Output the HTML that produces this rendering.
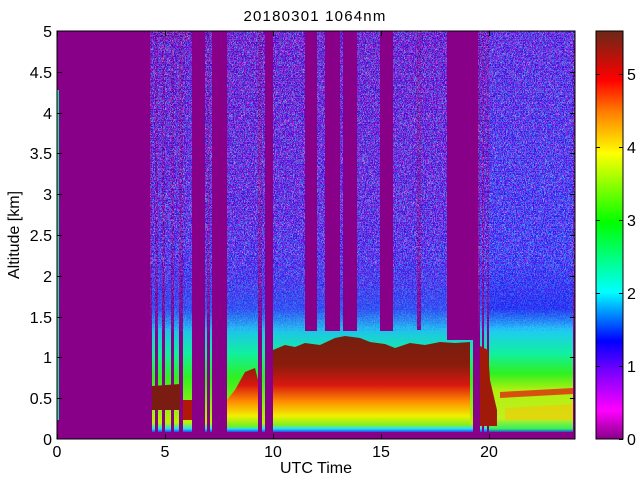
<!DOCTYPE html>
<html><head><style>
html,body{margin:0;padding:0;background:#fff;width:640px;height:480px;overflow:hidden}
svg{display:block;font-family:"Liberation Sans",sans-serif}
</style></head><body>
<svg width="640" height="480" viewBox="0 0 640 480">
<defs>
<linearGradient id="air" x1="0" y1="31" x2="0" y2="439" gradientUnits="userSpaceOnUse">
<stop offset="0" stop-color="#7a10b0"/>
<stop offset="0.45" stop-color="#6a20c8"/>
<stop offset="0.6" stop-color="#4a30e0"/>
<stop offset="0.68" stop-color="#2a50f0"/>
<stop offset="0.73" stop-color="#20c0f0"/>
<stop offset="0.79" stop-color="#10f0a0"/>
<stop offset="0.85" stop-color="#30f020"/>
<stop offset="0.92" stop-color="#90f010"/>
<stop offset="0.96" stop-color="#c0f000"/>
<stop offset="0.975" stop-color="#20e0f0"/>
<stop offset="0.985" stop-color="#2020f0"/>
<stop offset="0.99" stop-color="#880088"/>
</linearGradient>
<linearGradient id="right" x1="0" y1="31" x2="0" y2="439" gradientUnits="userSpaceOnUse">
<stop offset="0" stop-color="#6a20c8"/>
<stop offset="0.55" stop-color="#4038e8"/>
<stop offset="0.68" stop-color="#2030f0"/>
<stop offset="0.73" stop-color="#20c8f8"/>
<stop offset="0.79" stop-color="#10f0a0"/>
<stop offset="0.84" stop-color="#30f020"/>
<stop offset="0.88" stop-color="#b0f010"/>
<stop offset="0.95" stop-color="#c0f020"/>
<stop offset="0.975" stop-color="#30f060"/>
<stop offset="0.985" stop-color="#2020f0"/>
<stop offset="0.99" stop-color="#880088"/>
</linearGradient>
<linearGradient id="aer" x1="0" y1="330" x2="0" y2="430" gradientUnits="userSpaceOnUse">
<stop offset="0" stop-color="#702010"/>
<stop offset="0.35" stop-color="#8a1c0c"/>
<stop offset="0.55" stop-color="#d81810"/>
<stop offset="0.72" stop-color="#ff9000"/>
<stop offset="0.86" stop-color="#f0f000"/>
<stop offset="0.95" stop-color="#80f020"/>
<stop offset="1" stop-color="#20f0a0"/>
</linearGradient>
<linearGradient id="cb" x1="0" y1="439" x2="0" y2="31" gradientUnits="userSpaceOnUse">
<stop offset="0" stop-color="#880088"/>
<stop offset="0.07" stop-color="#ff00ff"/>
<stop offset="0.16" stop-color="#8000ff"/>
<stop offset="0.24" stop-color="#0000ff"/>
<stop offset="0.36" stop-color="#00ffff"/>
<stop offset="0.53" stop-color="#00ff00"/>
<stop offset="0.7" stop-color="#ffff00"/>
<stop offset="0.8" stop-color="#ff8000"/>
<stop offset="0.88" stop-color="#ff0000"/>
<stop offset="1" stop-color="#6a2818"/>
</linearGradient>
<linearGradient id="fade" x1="0" y1="31" x2="0" y2="439" gradientUnits="userSpaceOnUse">
<stop offset="0" stop-color="#fff"/>
<stop offset="0.55" stop-color="#fff"/>
<stop offset="0.78" stop-color="#000"/>
</linearGradient>
<mask id="m"><rect x="0" y="0" width="640" height="480" fill="url(#fade)"/></mask>
<filter id="nz" x="0" y="0" width="100%" height="100%">
<feTurbulence type="fractalNoise" baseFrequency="0.9 0.45" numOctaves="1" seed="3"/>
<feComponentTransfer>
<feFuncR type="discrete" tableValues="0 1 0 1 0 0 1 0"/>
<feFuncG type="discrete" tableValues="0 0 0 0 1 0 0 0"/>
<feFuncB type="discrete" tableValues="1 1 1 1 1 1 1 1"/>
<feFuncA type="discrete" tableValues="0 0 0.45 0.5 0.35 0.45 0 0"/>
</feComponentTransfer>
</filter>
</defs>
<rect width="640" height="480" fill="#fff"/>
<rect x="57" y="31" width="518" height="408" fill="#880088"/>
<g fill="url(#air)">
<rect x="152" y="40" width="3" height="392"/>
<rect x="158" y="40" width="4" height="392"/>
<rect x="165" y="40" width="6" height="392"/>
<rect x="174" y="40" width="5" height="392"/>
<rect x="183" y="40" width="9" height="392"/>
<rect x="205" y="35" width="2" height="397"/>
<rect x="210" y="35" width="2" height="397"/>
<rect x="227" y="31" width="31" height="401"/>
<rect x="262" y="31" width="3" height="401"/>
<rect x="273" y="31" width="32" height="401"/>
<rect x="317" y="31" width="8" height="401"/>
<rect x="340" y="31" width="3" height="401"/>
<rect x="357" y="31" width="23" height="401"/>
<rect x="393" y="31" width="24" height="401"/>
<rect x="421" y="31" width="26" height="401"/>
<rect x="480" y="31" width="2" height="401"/>
<rect x="484" y="31" width="3" height="401"/>
</g>
<rect x="489" y="31" width="84" height="401" fill="url(#right)"/>
<g fill="url(#air)">
<rect x="305" y="330" width="12" height="102"/>
<rect x="325" y="330" width="15" height="102"/>
<rect x="343" y="330" width="14" height="102"/>
<rect x="380" y="330" width="13" height="102"/>
<rect x="417" y="330" width="4" height="102"/>
<rect x="447" y="340" width="26" height="92"/>
</g>
<g filter="url(#nz)" mask="url(#m)">
<rect x="150" y="31" width="425" height="300" fill="#000"/>
</g>
<rect x="192" y="31" width="13" height="408" fill="#880088"/>
<rect x="212" y="31" width="15" height="408" fill="#880088"/>
<rect x="265" y="31" width="8" height="408" fill="#880088"/>
<rect x="305" y="31" width="12" height="300" fill="#880088"/>
<rect x="325" y="31" width="15" height="300" fill="#880088"/>
<rect x="343" y="31" width="14" height="300" fill="#880088"/>
<rect x="380" y="31" width="13" height="300" fill="#880088"/>
<rect x="447" y="31" width="31" height="305" fill="#880088"/>
<rect x="473" y="336" width="7" height="103" fill="#880088"/>
<path d="M273,350 L285,345 L295,347 L305,343 L320,345 L335,338 L345,336 L360,338 L370,342 L385,344 L395,348 L410,343 L425,345 L440,342 L455,343 L470,342 L470,426 L273,426 Z" fill="url(#aer)"/>
<path d="M227,400 L235,390 L245,372 L255,368 L258,380 L258,428 L227,428 Z" fill="url(#aer)"/>
<path d="M152,386 L180,384 L180,410 L152,410 Z" fill="#7a1c12"/>
<path d="M183,400 L192,400 L192,420 L183,420 Z" fill="#b01808"/>
<path d="M480,346 L488,350 L490,380 L497,410 L497,426 L480,426 Z" fill="#a01a0a"/>
<path d="M500,392 L573,388 L573,394 L500,398 Z" fill="#e02810" opacity="0.8"/>
<path d="M505,408 L573,404 L573,420 L505,420 Z" fill="#ffc000" opacity="0.5"/>
<rect x="57" y="90" width="2" height="330" fill="#20e0a0"/>
<rect x="57" y="31" width="518" height="408" fill="none" stroke="#000" stroke-width="1"/>
<g stroke="#000" stroke-width="1">
<path d="M57.5,439v-5M165.5,439v-5M273.5,439v-5M381.5,439v-5M489.5,439v-5M57.5,31v5M165.5,31v5M273.5,31v5M381.5,31v5M489.5,31v5"/>
<path d="M57,398.5h5M57,357.5h5M57,317.5h5M57,276.5h5M57,235.5h5M57,194.5h5M57,153.5h5M57,113.5h5M57,72.5h5M575,398.5h-5M575,357.5h-5M575,317.5h-5M575,276.5h-5M575,235.5h-5M575,194.5h-5M575,153.5h-5M575,113.5h-5M575,72.5h-5"/>
</g>
<g font-size="16" fill="#000" text-anchor="middle">
<text x="57" y="457">0</text><text x="165" y="457">5</text><text x="273" y="457">10</text><text x="381" y="457">15</text><text x="489" y="457">20</text>
<text x="316" y="473">UTC Time</text>
<text x="315" y="21" font-size="15" letter-spacing="1.2">20180301 1064nm</text>
</g>
<g font-size="16" fill="#000" text-anchor="end">
<text x="52" y="445">0</text><text x="52" y="404">0.5</text><text x="52" y="363">1</text><text x="52" y="323">1.5</text><text x="52" y="282">2</text><text x="52" y="241">2.5</text><text x="52" y="200">3</text><text x="52" y="159">3.5</text><text x="52" y="119">4</text><text x="52" y="78">4.5</text><text x="52" y="37">5</text>
</g>
<text x="19" y="235" font-size="16" text-anchor="middle" transform="rotate(-90 19 235)">Altitude [km]</text>
<rect x="596" y="31" width="27" height="408" fill="url(#cb)" stroke="#000" stroke-width="1"/>
<g stroke="#000"><path d="M623,439.5h-4M623,366.5h-4M623,293.5h-4M623,220.5h-4M623,147.5h-4M623,74.5h-4M596,366.5h4M596,293.5h4M596,220.5h4M596,147.5h4M596,74.5h4"/></g>
<g font-size="16" fill="#000">
<text x="627" y="445">0</text><text x="627" y="372">1</text><text x="627" y="299">2</text><text x="627" y="226">3</text><text x="627" y="153">4</text><text x="627" y="80">5</text>
</g>
</svg>
</body></html>
